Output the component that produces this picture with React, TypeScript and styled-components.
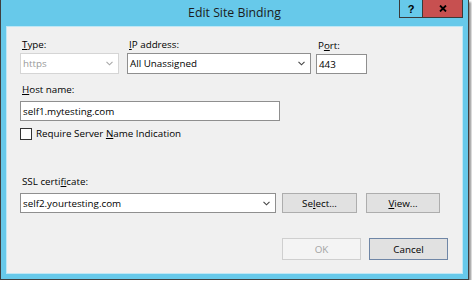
import React from "react";
import styled, { createGlobalStyle } from "styled-components";

const Global = createGlobalStyle`
  html, body { margin: 0; padding: 0; background: #ffffff; }
  body { font-family: "Open Sans", "Noto Sans", "Liberation Sans", sans-serif; }
`;

const Window = styled.div`
  width: 469px;
  height: 280px;
  box-sizing: border-box;
  background: #67c9ea;
  border: 1px solid #3f3f3f;
  border-top: none;
  box-shadow: 2px 2px 2px rgba(0, 0, 0, 0.45);
  display: flex;
  flex-direction: column;
  padding: 0 5px 5px 5px;
`;

const TitleBar = styled.div`
  height: 26px;
  display: grid;
  grid-template-columns: 1fr auto 1fr;
  flex-shrink: 0;
`;

const Title = styled.div`
  grid-column: 2;
  margin-top: 4px;
  font-size: 12.3px;
  line-height: 17px;
  color: #1c1c1c;
  white-space: nowrap;
`;

const CaptionButtons = styled.div`
  grid-column: 3;
  justify-self: end;
  align-self: start;
  display: flex;
`;

const CaptionButton = styled.div<{ $width: number; $bg: string }>`
  width: ${(p) => p.$width}px;
  height: 18px;
  box-sizing: border-box;
  border: 1px solid #3a3a3a;
  border-top: none;
  background: ${(p) => p.$bg};
  display: flex;
  align-items: center;
  justify-content: center;
  font-family: "Liberation Sans", Arial, sans-serif;
  font-weight: bold;
  font-size: 11px;
  color: #000;
  & + & {
    border-left: none;
  }
`;

const Content = styled.div`
  flex: 1;
  background: #f0f0f0;
  border: 1px solid #bfe7f5;
  padding: 12px 0 0 13px;
  display: flex;
  flex-direction: column;
`;

const Row = styled.div<{ $mt?: number }>`
  display: flex;
  align-items: flex-end;
  margin-top: ${(p) => p.$mt ?? 0}px;
`;

const FieldGroup = styled.div<{ $width: number; $ml?: number }>`
  width: ${(p) => p.$width}px;
  margin-left: ${(p) => p.$ml ?? 0}px;
  display: flex;
  flex-direction: column;
`;

const Label = styled.div<{ $mb?: number }>`
  font-size: 9.8px;
  line-height: 12px;
  color: #000;
  padding-left: 2px;
  margin-bottom: ${(p) => p.$mb ?? 2}px;
  white-space: nowrap;
  u {
    text-decoration: underline;
    text-underline-offset: 1px;
  }
`;

const Box = styled.div<{ $height: number; $disabled?: boolean }>`
  height: ${(p) => p.$height}px;
  box-sizing: border-box;
  background: #fff;
  border: 1px solid ${(p) => (p.$disabled ? "#d5d5d5" : "#8f8f8f")};
  display: flex;
  align-items: center;
  padding: 0 5px 0 2px;
  font-size: 9.8px;
  color: ${(p) => (p.$disabled ? "#9a9a9a" : "#000")};
  white-space: nowrap;
`;

const BoxText = styled.span`
  flex: 1;
`;

const Chevron = ({ color }: { color: string }) => (
  <svg width="7" height="5" viewBox="0 0 7 5">
    <path d="M0.5 0.8 L3.5 3.8 L6.5 0.8" fill="none" stroke={color} strokeWidth="1.1" />
  </svg>
);

const CheckRow = styled.div`
  display: flex;
  align-items: center;
  margin-top: 7px;
  height: 12px;
`;

const CheckBox = styled.div`
  width: 12px;
  height: 12px;
  box-sizing: border-box;
  border: 1px solid #333;
  background: #fff;
  margin-right: 4px;
`;

const CheckLabel = styled.span`
  font-size: 9.8px;
  line-height: 12px;
  color: #000;
  u {
    text-underline-offset: 1px;
  }
`;

const Button = styled.div<{
  $width: number;
  $height: number;
  $ml: number;
  $variant?: "disabled" | "default";
}>`
  width: ${(p) => p.$width}px;
  height: ${(p) => p.$height}px;
  margin-left: ${(p) => p.$ml}px;
  box-sizing: border-box;
  display: flex;
  align-items: center;
  justify-content: center;
  font-size: 9.8px;
  background: ${(p) => (p.$variant === "disabled" ? "#f4f4f4" : "#e1e1e1")};
  border: 1px solid
    ${(p) =>
      p.$variant === "disabled"
        ? "#cfcfcf"
        : p.$variant === "default"
        ? "#6f86a6"
        : "#adadad"};
  color: ${(p) => (p.$variant === "disabled" ? "#a3a3a3" : "#000")};
  u {
    text-underline-offset: 1px;
  }
`;

export default function App() {
  return (
    <>
      <Global />
      <Window>
        <TitleBar>
          <Title>Edit Site Binding</Title>
          <CaptionButtons>
            <CaptionButton $width={24} $bg="transparent">?</CaptionButton>
            <CaptionButton $width={40} $bg="#c75050">
              <svg width="8" height="7" viewBox="0 0 8 7">
                <path d="M1 0.5 L7 6.5 M7 0.5 L1 6.5" stroke="#000" strokeWidth="1.8" />
              </svg>
            </CaptionButton>
          </CaptionButtons>
        </TitleBar>
        <Content>
          <Row>
            <FieldGroup $width={99}>
              <Label>
                <u>T</u>ype:
              </Label>
              <Box $height={21} $disabled>
                <BoxText>https</BoxText>
                <Chevron color="#a8a8a8" />
              </Box>
            </FieldGroup>
            <FieldGroup $width={184} $ml={8}>
              <Label>
                <u>I</u>P address:
              </Label>
              <Box $height={21}>
                <BoxText>All Unassigned</BoxText>
                <Chevron color="#444" />
              </Box>
            </FieldGroup>
            <FieldGroup $width={51} $ml={5}>
              <Label>
                P<u>o</u>rt:
              </Label>
              <Box $height={20}>
                <BoxText>443</BoxText>
              </Box>
            </FieldGroup>
          </Row>
          <Row $mt={10}>
            <FieldGroup $width={260}>
              <Label $mb={5}>
                <u>H</u>ost name:
              </Label>
              <Box $height={20}>
                <BoxText>self1.mytesting.com</BoxText>
              </Box>
            </FieldGroup>
          </Row>
          <CheckRow>
            <CheckBox />
            <CheckLabel>
              Require Server <u>N</u>ame Indication
            </CheckLabel>
          </CheckRow>
          <Row $mt={36}>
            <FieldGroup $width={256}>
              <Label $mb={5}>
                SSL certi<u>f</u>icate:
              </Label>
              <Box $height={20}>
                <BoxText>self2.yourtesting.com</BoxText>
                <Chevron color="#444" />
              </Box>
            </FieldGroup>
            <Button $width={75} $height={20} $ml={6}>
              Se<u>l</u>ect...
            </Button>
            <Button $width={74} $height={20} $ml={9}>
              <u>V</u>iew...
            </Button>
          </Row>
          <Row $mt={25}>
            <Button $width={79} $height={22} $ml={262} $variant="disabled">
              OK
            </Button>
            <Button $width={79} $height={22} $ml={8} $variant="default">
              Cancel
            </Button>
          </Row>
        </Content>
      </Window>
    </>
  );
}
